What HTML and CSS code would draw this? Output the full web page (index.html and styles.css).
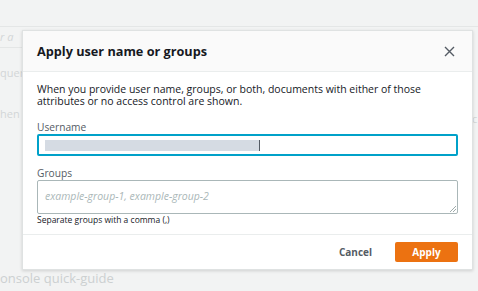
FILE: index.html
```html
<!DOCTYPE html>
<html>
<head>
    <title>Apply user name or groups</title>
    <link rel="stylesheet" href="styles.css">
</head>
<body>
    <div class="page">
        <div class="topbar"></div>
        <div class="behind">
            <div class="ghost ghost-search">r a</div>
            <div class="ghost-rule"></div>
            <div class="ghost ghost-query">quer</div>
            <div class="ghost ghost-when">hen y</div>
            <div class="ghost ghost-right">c</div>
            <div class="ghost ghost-guide">onsole quick-guide</div>
        </div>
    </div>

    <div class="modal">
        <div class="modal-header">
            <h2>Apply user name or groups</h2>
            <button class="close" aria-label="Close">
                <svg width="11" height="11" viewBox="0 0 11 11">
                    <path d="M1 1 L10 10 M10 1 L1 10" stroke="#545b64" stroke-width="1.4" fill="none"/>
                </svg>
            </button>
        </div>

        <div class="modal-body">
            <p class="intro">When you provide user name, groups, or both, documents with either of those attributes or no access control are shown.</p>

            <label class="field-label">Username</label>
            <div class="input focused">
                <span class="selection"></span><span class="caret"></span>
            </div>

            <label class="field-label groups-label">Groups</label>
            <div class="textarea">
                <span class="placeholder">example-group-1, example-group-2</span>
                <svg class="grip" width="6" height="6" viewBox="0 0 6 6">
                    <path d="M0 6 L6 0 M3 6 L6 3" stroke="#879596" stroke-width="0.8"/>
                </svg>
            </div>
            <p class="hint">Separate groups with a comma (,)</p>
        </div>

        <div class="modal-footer">
            <button class="button link">Cancel</button>
            <button class="button primary">Apply</button>
        </div>
    </div>
</body>
</html>
```

FILE: styles.css
```css
body {
    margin: 0;
    width: 478px;
    height: 291px;
    overflow: hidden;
    background-color: #f2f3f3;
    font-family: "Open Sans", "Noto Sans", Arial, sans-serif;
    color: #16191f;
}
.page {
    position: relative;
    height: 291px;
}
.topbar {
    height: 26px;
    background: #f2f3f3;
    border-bottom: 1px solid #e4e6e6;
}
.behind {
    position: relative;
    color: #d3d6d7;
    font-size: 11px;
}
.ghost {
    position: absolute;
    left: 0;
}
.ghost-search {
    top: 2px;
    font-style: italic;
}
.ghost-rule {
    position: absolute;
    left: 0;
    top: 20px;
    width: 24px;
    border-top: 1px solid #e4e6e6;
}
.ghost-query {
    top: 38px;
}
.ghost-when {
    top: 79px;
}
.ghost-right {
    left: 472px;
    top: 84px;
}
.ghost-guide {
    top: 242px;
    font-size: 13px;
    color: #ccd0d1;
}

.modal {
    position: absolute;
    left: 22px;
    top: 30px;
    width: 449px;
    height: 238px;
    background: white;
    border: 1px solid #dfe2e2;
    box-shadow: 0 1px 3px rgba(0,0,0,0.15);
    display: flex;
    flex-direction: column;
}
.modal-header {
    height: 40px;
    background: #fafafa;
    border-bottom: 1px solid #eaeded;
    display: flex;
    align-items: center;
    justify-content: space-between;
    padding: 0 17px 0 14px;
}
.modal-header h2 {
    margin: 0;
    font-size: 12.7px;
    font-weight: bold;
    color: #16191f;
}
.close {
    border: none;
    background: none;
    padding: 0;
    display: flex;
    cursor: pointer;
}
.modal-body {
    padding: 11px 14px 0 14px;
    flex: 1;
    border-bottom: 1px solid #eaeded;
}
.intro {
    margin: 0;
    font-size: 10.5px;
    line-height: 12px;
    color: #16191f;
}
.field-label {
    display: block;
    margin-top: 14px;
    font-size: 10.2px;
    line-height: 12px;
    color: #545b64;
}
.groups-label {
    margin-top: 11px;
}
.input {
    margin-top: 1px;
    height: 18px;
    border: 2px solid #00a1c9;
    border-radius: 2px;
    display: flex;
    align-items: center;
    padding: 0 6px;
}
.selection {
    width: 214px;
    height: 11px;
    background: #d5dbe3;
}
.caret {
    width: 1px;
    height: 11px;
    background: #545b64;
}
.textarea {
    position: relative;
    margin-top: 1px;
    height: 34px;
    border: 1px solid #aab7b8;
    border-radius: 2px;
    padding: 2px 7px;
    box-sizing: border-box;
}
.placeholder {
    font-size: 10.5px;
    font-style: italic;
    color: #aab7b8;
}
.grip {
    position: absolute;
    right: 1px;
    bottom: 1px;
}
.hint {
    margin: 0;
    font-size: 8.5px;
    line-height: 11px;
    color: #16191f;
}
.modal-footer {
    height: 34px;
    display: flex;
    align-items: center;
    justify-content: flex-end;
    padding: 0 14px;
    gap: 23px;
}
.button {
    font-family: inherit;
    font-size: 10px;
    font-weight: bold;
    border: none;
    cursor: pointer;
}
.link {
    background: none;
    color: #545b64;
    padding: 0;
}
.primary {
    background-color: #ec7211;
    color: white;
    width: 63px;
    height: 20px;
    border-radius: 2px;
}
```
